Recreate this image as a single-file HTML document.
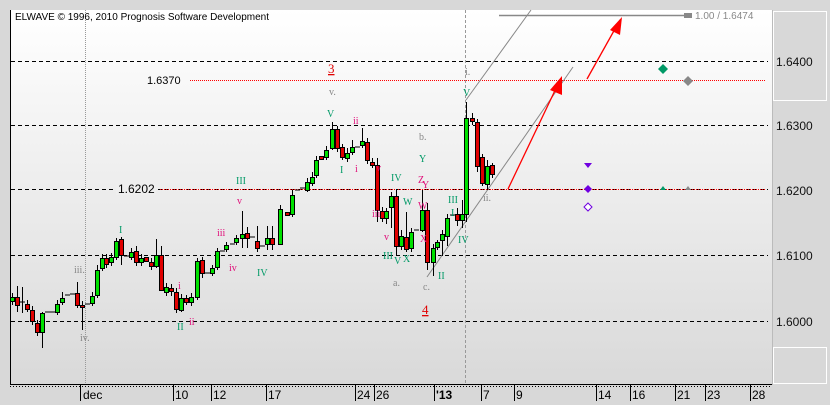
<!DOCTYPE html>
<html><head><meta charset="utf-8"><style>
html,body{margin:0;padding:0;background:#d8d8d8;width:830px;height:405px;overflow:hidden}
svg{display:block;font-family:"Liberation Sans",sans-serif}
</style></head><body>
<svg width="830" height="405" viewBox="0 0 830 405" xmlns="http://www.w3.org/2000/svg">
<defs><linearGradient id="bg" x1="0" y1="0" x2="0" y2="1"><stop offset="0" stop-color="#ffffff"/><stop offset="1" stop-color="#d9d9d9"/></linearGradient></defs>
<rect x="0" y="0" width="830" height="405" fill="#d8d8d8"/>
<rect x="10" y="10" width="762" height="375" fill="url(#bg)"/>
<line x1="10.5" y1="10" x2="10.5" y2="385" stroke="#000"/>
<line x1="10" y1="384.5" x2="772" y2="384.5" stroke="#000"/>
<!-- right axis panel -->
<rect x="772" y="10" width="58" height="375" fill="#d8d8d8"/>
<rect x="773.5" y="11.5" width="53" height="89" fill="none" stroke="#fff"/>
<rect x="773.5" y="347.5" width="53" height="36" fill="none" stroke="#fff"/>
<line x1="772.5" y1="10" x2="772.5" y2="385" stroke="#bbb"/>
<g font-size="12" fill="#111">
<text x="776" y="66">1.6400</text><text x="776" y="130">1.6300</text><text x="776" y="195">1.6200</text><text x="776" y="260">1.6100</text><text x="776" y="326">1.6000</text>
</g>
<!-- grid -->
<g stroke="#000" stroke-dasharray="4,3">
<line x1="11" y1="61.5" x2="768" y2="61.5"/><line x1="11" y1="125.5" x2="768" y2="125.5"/><line x1="11" y1="189.5" x2="768" y2="189.5"/><line x1="11" y1="255.5" x2="768" y2="255.5"/><line x1="11" y1="321.5" x2="768" y2="321.5"/>
</g>
<g stroke="#f00" stroke-dasharray="1,1"><line x1="190" y1="80.5" x2="765" y2="80.5"/><line x1="160" y1="189.5" x2="765" y2="189.5"/></g>
<line x1="85.5" y1="10" x2="85.5" y2="384" stroke="#999" stroke-dasharray="1,1"/>
<line x1="465.5" y1="10" x2="465.5" y2="384" stroke="#999" stroke-dasharray="3,2"/>
<text x="15" y="20" font-size="10" fill="#000">ELWAVE © 1996, 2010 Prognosis Software Development</text>
<text x="147" y="84" font-size="11" fill="#000">1.6370</text>
<rect x="116" y="183" width="40" height="12" fill="#eee"/>
<text x="118" y="193" font-size="12" fill="#000">1.6202</text>
<!-- gray lines -->
<line x1="499" y1="15.5" x2="688" y2="15.5" stroke="#888" stroke-width="1.5"/>
<rect x="684" y="13" width="8" height="5" fill="#888"/>
<text x="695" y="19" font-size="10" fill="#888">1.00 / 1.6474</text>
<line x1="466" y1="100" x2="531" y2="10" stroke="#888"/>
<line x1="427" y1="277" x2="573" y2="67" stroke="#888"/>
<!-- red arrows -->
<g stroke="#f00" stroke-width="1.3"><line x1="508" y1="189" x2="560" y2="80"/><line x1="587" y1="79" x2="620" y2="20"/></g>
<polygon points="562,76 562,95 550,90" fill="#f00"/>
<polygon points="622,17 620,35 610,30" fill="#f00"/>
<!-- wicks -->
<path stroke="#000" fill="none" d="M12.5 293V305M17.5 286V312M22.5 287V313M27.5 300V312M32.5 306V325M37.5 320V336M42.5 312V348M57.5 300V315M62.5 292V305M77.5 282V308M82.5 301V330M92.5 292V306M97.5 265V298M102.5 254V271M106.5 254V268M111.5 253V266M116.5 238V260M121.5 237V265M131.5 248V260M136.5 246V266M141.5 254V266M151.5 258V270M156.5 239V268M161.5 246V291M166.5 283V296M171.5 284V296M176.5 288V313M181.5 294V312M186.5 295V305M191.5 293V306M197.5 258V300M202.5 257V278M212.5 265V276M217.5 248V270M226.5 242V252M236.5 235V245M242.5 211V248M247.5 227V248M257.5 226V252M267.5 226V250M272.5 226V250M280.5 205V245M292.5 190V217M307.5 178V192M312.5 172V186M316.5 156V178M326.5 146V160M332.5 122V150M337.5 126V152M342.5 144V160M347.5 148V162M352.5 140V155M362.5 128V148M367.5 138V164M372.5 158V168M377.5 158V222M382.5 207V222M386.5 208V224M391.5 192V228M396.5 189V255M401.5 230V250M406.5 212V252M411.5 228V252M422.5 190V232M427.5 203V270M433.5 244V276M437.5 240V250M442.5 230V256M447.5 214V246M457.5 208V226M462.5 200V228M466.5 102V222M472.5 113V125M477.5 119V172M482.5 154V186M487.5 160V190M492.5 163V178"/>
<!-- dojis -->
<path stroke="#000" d="M20 302H25M45 312H50M50 312H55M65 295H70M70 294H75M85 304H90M124 256H129M205 273H210M220 251H225M230 244H235M250 237H255M260 246H265M295 190H300M300 188H305M355 147H360M414 230H419M450 215H455"/>
<!-- green bodies -->
<g fill="#00e000" stroke="#000">
<rect x="10.5" y="297.5" width="4" height="4"/><rect x="40.5" y="313.5" width="4" height="19"/><rect x="55.5" y="304.5" width="4" height="8"/><rect x="60.5" y="298.5" width="4" height="4"/><rect x="90.5" y="296.5" width="4" height="7"/><rect x="95.5" y="270.5" width="4" height="25"/><rect x="100.5" y="258.5" width="4" height="10"/><rect x="109.5" y="257.5" width="4" height="5"/><rect x="114.5" y="241.5" width="4" height="16"/><rect x="129.5" y="252.5" width="4" height="5"/><rect x="139.5" y="258.5" width="4" height="4"/><rect x="154.5" y="255.5" width="4" height="11"/><rect x="164.5" y="287.5" width="4" height="5"/><rect x="179.5" y="298.5" width="4" height="12"/><rect x="189.5" y="297.5" width="4" height="5"/><rect x="195.5" y="261.5" width="4" height="36"/><rect x="210.5" y="268.5" width="4" height="5"/><rect x="215.5" y="251.5" width="4" height="16"/><rect x="224.5" y="245.5" width="4" height="4"/><rect x="234.5" y="238.5" width="4" height="4"/><rect x="240.5" y="234.5" width="4" height="4"/><rect x="265.5" y="238.5" width="4" height="6"/><rect x="278.5" y="209.5" width="4" height="35"/><rect x="290.5" y="195.5" width="4" height="19"/><rect x="305.5" y="182.5" width="4" height="8"/><rect x="310.5" y="177.5" width="4" height="6"/><rect x="314.5" y="160.5" width="4" height="15"/><rect x="324.5" y="150.5" width="4" height="7"/><rect x="330.5" y="129.5" width="4" height="19"/><rect x="345.5" y="153.5" width="4" height="5"/><rect x="350.5" y="147.5" width="4" height="5"/><rect x="360.5" y="141.5" width="4" height="4"/><rect x="384.5" y="211.5" width="4" height="7"/><rect x="389.5" y="196.5" width="4" height="11"/><rect x="399.5" y="236.5" width="4" height="10"/><rect x="409.5" y="232.5" width="4" height="16"/><rect x="420.5" y="210.5" width="4" height="20"/><rect x="431.5" y="248.5" width="4" height="14"/><rect x="435.5" y="242.5" width="4" height="5"/><rect x="440.5" y="234.5" width="4" height="6"/><rect x="445.5" y="218.5" width="4" height="18"/><rect x="460.5" y="214.5" width="4" height="6"/><rect x="464.5" y="118.5" width="4" height="96"/><rect x="485.5" y="166.5" width="4" height="18"/>
</g>
<!-- red bodies -->
<g fill="#e00000" stroke="#000">
<rect x="15.5" y="297.5" width="4" height="8"/><rect x="25.5" y="304.5" width="4" height="5"/><rect x="30.5" y="310.5" width="4" height="11"/><rect x="35.5" y="323.5" width="4" height="9"/><rect x="75.5" y="293.5" width="4" height="12"/><rect x="80.5" y="305.5" width="4" height="2"/><rect x="104.5" y="258.5" width="4" height="6"/><rect x="119.5" y="239.5" width="4" height="16"/><rect x="134.5" y="251.5" width="4" height="11"/><rect x="144.5" y="257.5" width="4" height="4"/><rect x="149.5" y="262.5" width="4" height="4"/><rect x="159.5" y="255.5" width="4" height="35"/><rect x="169.5" y="288.5" width="4" height="3"/><rect x="174.5" y="292.5" width="4" height="17"/><rect x="184.5" y="298.5" width="4" height="4"/><rect x="200.5" y="260.5" width="4" height="13"/><rect x="245.5" y="233.5" width="4" height="5"/><rect x="255.5" y="241.5" width="4" height="7"/><rect x="270.5" y="238.5" width="4" height="6"/><rect x="285.5" y="212.5" width="4" height="3"/><rect x="319.5" y="156.5" width="4" height="3"/><rect x="335.5" y="129.5" width="4" height="19"/><rect x="340.5" y="147.5" width="4" height="10"/><rect x="365.5" y="142.5" width="4" height="18"/><rect x="370.5" y="162.5" width="4" height="3"/><rect x="375.5" y="165.5" width="4" height="45"/><rect x="380.5" y="211.5" width="4" height="7"/><rect x="394.5" y="196.5" width="4" height="50"/><rect x="404.5" y="237.5" width="4" height="12"/><rect x="425.5" y="210.5" width="4" height="52"/><rect x="455.5" y="214.5" width="4" height="6"/><rect x="470.5" y="118.5" width="4" height="3"/><rect x="475.5" y="122.5" width="4" height="44"/><rect x="480.5" y="157.5" width="4" height="26"/><rect x="490.5" y="165.5" width="4" height="9"/>
</g>
<!-- wave labels -->
<g font-family="Liberation Serif,serif" font-size="10">
<g fill="#888"><text x="74" y="273">iii.</text><text x="80" y="341">iv.</text><text x="329" y="95">v.</text><text x="419" y="140">b.</text><text x="393" y="286">a.</text><text x="423" y="290">c.</text><text x="465" y="75">i.</text><text x="483" y="201">ii.</text></g>
<g fill="#009966"><text x="119" y="233">I</text><text x="177" y="330">II</text><text x="236" y="184">III</text><text x="257" y="276">IV</text><text x="327" y="117">V</text><text x="340" y="173">I</text><text x="391" y="181">IV</text><text x="419" y="162">Y</text><text x="403" y="205">W</text><text x="383" y="259">III</text><text x="394" y="264">V</text><text x="403" y="262">X</text><text x="448" y="203">III</text><text x="451" y="216">I</text><text x="438" y="279">II</text><text x="458" y="243">IV</text><text x="463" y="96">V</text></g>
<g fill="#e0107a"><text x="178" y="289">i</text><text x="189" y="325">ii</text><text x="217" y="236">iii</text><text x="229" y="271">iv</text><text x="237" y="204">v</text><text x="353" y="124">ii</text><text x="355" y="172">i</text><text x="376" y="171">v</text><text x="372" y="217">iii</text><text x="384" y="240">v</text><text x="418" y="183">Z</text><text x="418" y="209">W</text><text x="420" y="242">X</text><text x="422" y="188">Y</text></g>
</g>
<g font-family="Liberation Serif,serif" font-size="13" fill="#e00000"><text x="328" y="73" text-decoration="underline">3</text><text x="422" y="314" text-decoration="underline">4</text></g>
<!-- markers -->
<polygon points="663,64 668,69 663,74 658,69" fill="#009966"/>
<polygon points="688,76 693,81 688,86 683,81" fill="#888"/>
<polygon points="584,163 592,163 588,168" fill="#7000e0"/>
<polygon points="588,185 592,189 588,193 584,189" fill="#7000e0"/>
<polygon points="588,203 592,207 588,211 584,207" fill="#fff" stroke="#7000e0"/>
<polygon points="660,190 663,186 666,190" fill="#009966"/>
<polygon points="685,190 688,186 691,190" fill="#888"/>
<!-- bottom axis -->
<path stroke="#000" d="M80.5 385V401M173.5 385V401M211.5 385V401M266.5 385V401M355.5 385V401M374.5 385V401M434.5 385V401M481.5 385V401M514.5 385V401M596.5 385V401M630.5 385V401M675.5 385V401M705.5 385V401M750.5 385V401"/>
<path stroke="#000" stroke-dasharray="1,2" d="M10 386.5H770"/>
<g font-size="12" fill="#000"><text x="83" y="399">dec</text><text x="175" y="399">10</text><text x="213" y="399">12</text><text x="268" y="399">17</text><text x="357" y="399">24</text><text x="376" y="399">26</text><text x="436" y="399" font-weight="bold">'13</text><text x="483" y="399">7</text><text x="516" y="399">9</text><text x="598" y="399">14</text><text x="632" y="399">16</text><text x="677" y="399">21</text><text x="707" y="399">23</text><text x="752" y="399">28</text></g>
</svg>
</body></html>
